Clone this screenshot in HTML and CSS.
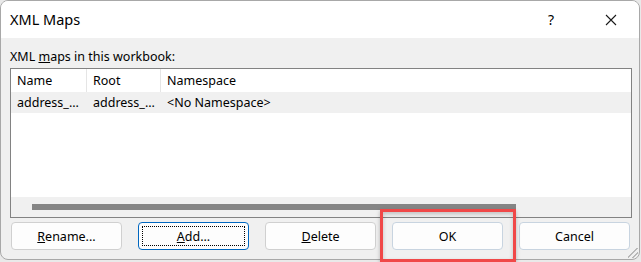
FILE: index.html
```html
<!DOCTYPE html>
<html lang="en">
<head>
  <meta charset="UTF-8" />
  <title>XML Maps</title>
  <link rel="stylesheet" href="styles.css">
</head>
<body>
  <div class="dialog">
    <!-- title bar -->
    <div class="titlebar">
      <span class="title">XML Maps</span>
      <span class="help">?</span>
      <span class="close">
        <svg width="12" height="12" viewBox="0 0 12 12"><path d="M1 1 L11 11 M11 1 L1 11" stroke="#1a1a1a" stroke-width="1.1" fill="none"/></svg>
      </span>
    </div>

    <div class="content">
      <div class="label">XML <u>m</u>aps in this workbook:</div>

      <div class="list">
        <div class="list-head">
          <div class="cell">Name</div>
          <div class="cell">Root</div>
          <div class="cell">Namespace</div>
        </div>
        <div class="list-row">
          <div class="cell">address_...</div>
          <div class="cell">address_...</div>
          <div class="cell">&lt;No Namespace&gt;</div>
        </div>
        <div class="list-body"></div>
        <div class="hscroll"><div class="thumb"></div></div>
      </div>

      <div class="buttons">
        <button class="btn"><u>R</u>ename...</button>
        <button class="btn focus"><span class="focus-rect"><u>A</u>dd...</span></button>
        <button class="btn"><u>D</u>elete</button>
        <button class="btn default">OK</button>
        <button class="btn default">Cancel</button>
      </div>
    </div>

    <div class="grip"></div>
  </div>

  <!-- annotation -->
  <div class="highlight"></div>
</body>
</html>
```

FILE: styles.css
```css
body {
  margin: 0;
  background: #e9e9e9;
  font-family: "Noto Sans", "Open Sans", sans-serif;
  color: #000;
  width: 641px;
  height: 262px;
  overflow: hidden;
}
.dialog {
  box-sizing: border-box;
  width: 640px;
  height: 260px;
  border: 1px solid #a8a8a8;
  border-radius: 8px;
  background: #f0f0f0;
  overflow: hidden;
  position: relative;
}
.titlebar {
  height: 37px;
  background: #fff;
  display: flex;
  align-items: center;
  padding-left: 9px;
}
.title {
  font-size: 14.5px;
  flex: 1;
  margin-top: -1px;
}
.help {
  font-size: 14px;
  width: 14px;
  margin-right: 43px;
}
.close {
  width: 12px;
  height: 12px;
  margin-right: 22px;
  display: flex;
}
.content {
  padding: 11px 7px 0 9px;
  font-size: 12.5px;
}
.label {
  line-height: 16px;
  margin-bottom: 3px;
}
.list {
  box-sizing: border-box;
  width: 622px;
  height: 150px;
  border: 1px solid #828282;
  background: #fff;
  display: flex;
  flex-direction: column;
}
.list-head, .list-row {
  display: grid;
  grid-template-columns: 76px 74px 1fr;
}
.list-head {
  height: 23px;
}
.list-head .cell {
  border-right: 1px solid #e5e5e5;
  line-height: 23px;
  padding-left: 6px;
}
.list-head .cell:last-child {
  border-right: none;
}
.list-row {
  height: 21px;
  background: #f0f0f0;
}
.list-row .cell {
  line-height: 21px;
  padding-left: 6px;
  white-space: nowrap;
}
.list-body {
  flex: 1;
}
.hscroll {
  height: 20px;
  background: #f0f0f0;
  padding: 7px 0 0 21px;
  box-sizing: border-box;
}
.thumb {
  width: 484px;
  height: 6px;
  background: #858585;
}
.buttons {
  display: flex;
  gap: 16px;
  margin-top: 4px;
  padding-left: 1px;
}
.btn {
  box-sizing: border-box;
  width: 111px;
  height: 28px;
  background: #fdfdfd;
  border: 1px solid #d0d0d0;
  border-radius: 4px;
  font-family: inherit;
  font-size: 12.5px;
  color: #000;
  padding: 0;
}
.btn.default {
  border-color: #c8d4e0;
}
.btn.focus {
  border: 1px solid #0067c0;
  padding: 3px;
}
.focus-rect {
  display: flex;
  align-items: center;
  justify-content: center;
  height: 100%;
  box-sizing: border-box;
  border: 1px dotted #000;
}
.grip {
  position: absolute;
  right: 1px;
  bottom: 1px;
  width: 10px;
  height: 10px;
  background: linear-gradient(135deg, transparent 45%, #b8b8b8 45%, #b8b8b8 52%, transparent 52%, transparent 70%, #b8b8b8 70%, #b8b8b8 77%, transparent 77%);
}
.highlight {
  position: absolute;
  left: 380px;
  top: 209px;
  width: 130px;
  height: 47px;
  border: 3px solid #f04848;
  box-shadow: 0 2px 4px rgba(0, 0, 0, 0.25), inset 0 2px 4px rgba(0, 0, 0, 0.2);
}
```
